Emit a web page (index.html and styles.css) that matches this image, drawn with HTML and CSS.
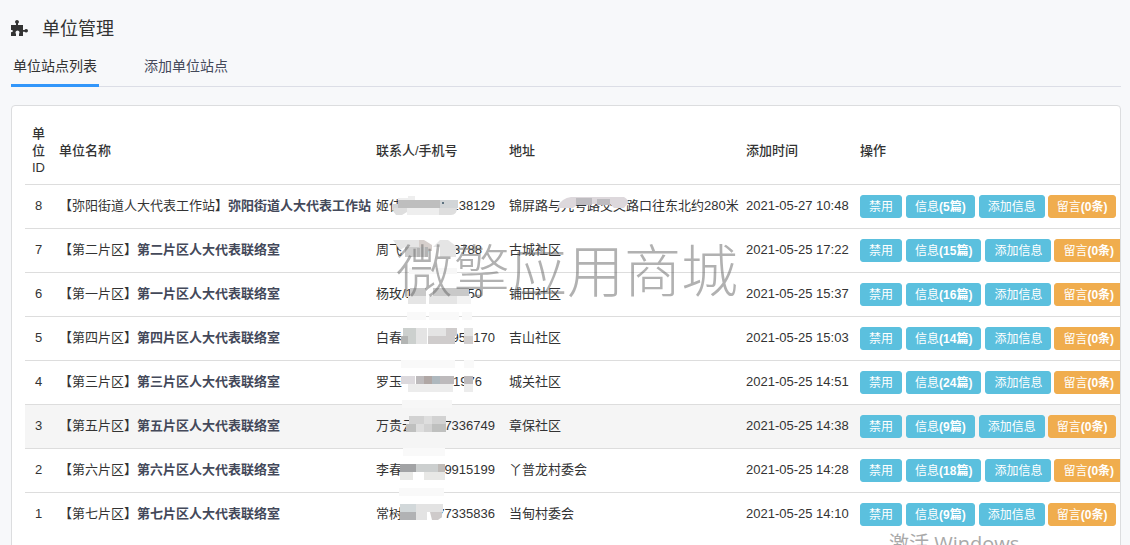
FILE: index.html
```html
<!DOCTYPE html>
<html lang="zh-CN">
<head>
<meta charset="utf-8">
<title>单位管理</title>
<link rel="stylesheet" href="styles.css">
</head>
<body>
<main class="page">
  <header class="head">
    <svg class="puzzle" viewBox="0 0 17 16" aria-hidden="true"><path d="M0 5h5V3.500Q4 3 4 1.800Q4.300 0 6 0T8 1.800Q8 3 7 3.500V5h5v5h1.500Q14 9 15.300 9Q17 9.300 17 10.800T15.300 12.500Q14 12.500 13.500 11.700H12V16H8v-2Q8.500 13 8.500 12Q8 10.500 6.500 10.500T4.500 12Q4.500 13.500 5 14v2H0v-4Q1.500 12.500 2 11Q1.500 9.500 0 10Z"/></svg>
    <h1>单位管理</h1>
  </header>
  <nav class="tabs">
    <a class="tab active" href="#list">单位站点列表</a>
    <a class="tab" href="#add">添加单位站点</a>
  </nav>
  <section class="panel" id="list">
    <table>
      <colgroup><col class="c-id"><col><col class="c-contact"><col class="c-address"><col class="c-time"><col class="c-ops"></colgroup>
      <thead>
        <tr><th class="id">单位ID</th><th>单位名称</th><th>联系人/手机号</th><th>地址</th><th>添加时间</th><th>操作</th></tr>
      </thead>
      <tbody>
        <tr>
          <td class="id">8</td>
          <td>【弥阳街道人大代表工作站】<a href="#8">弥阳街道人大代表工作站</a></td>
          <td class="contact"><div class="long"><span>姬佳</span><span>138129</span></div>
            <svg class="mosaic" viewBox="0 0 133 44" aria-hidden="true"><path fill="#eee" d="M39 11h7v4h-7zM29 13h10v3h-10zM38 23h32v7h-32z"/><path fill="#bebebe" d="M29 15h42v8h-42z"/><path fill="#d2d5d7" d="M71 15h18v8h-18zM23 19h6v6h-6z"/><path fill="#dedede" d="M25 23h13v4l-5 3h-6l-3-4zM70 23h18q0 7-6 7h-12z"/><path fill="#5e7280" d="M73 17h2v2h-2z"/></svg></td>
          <td class="address">锦屏路与九号路交叉路口往东北约280米
            <svg class="mosaic" viewBox="0 0 133 44" aria-hidden="true"><path fill="#ddd8dc" d="M55 22q5-9 14-10h53q5 3 4 6l-4 5h-10l-4-4h-18l-3 1h-12l-4 3h-14z"/><path fill="#bebcc0" d="M74 13h16v7h-16zM95 14h13v6h-13z"/></svg></td>
          <td>2021-05-27 10:48</td>
          <td><div class="ops"><button class="btn">禁用</button><button class="btn">信息<b>(5篇)</b></button><button class="btn">添加信息</button><button class="btn warn">留言<b>(0条)</b></button></div></td>
        </tr>
        <tr>
          <td class="id">7</td>
          <td>【第二片区】<a href="#7">第二片区人大代表联络室</a></td>
          <td class="contact"><div><span>周飞</span><span>7</span><span>3788</span></div>
            <svg class="mosaic" viewBox="0 0 133 44" aria-hidden="true"><path fill="#e5e5e5" d="M24 11h26v7h-14l-5 3zM64 18l7-7h8l8 6v11h-16v-10z"/><path fill="#d6cfcc" d="M50 11h5l8 5v6h-13z"/><path fill="#ccc" d="M36 18h20v10h-20z"/><path fill="#b4b4b4" d="M48 19h3v9h-3zM56 18h3v10h-3z"/></svg></td>
          <td>古城社区</td><td>2021-05-25 17:22</td>
          <td><div class="ops"><button class="btn">禁用</button><button class="btn">信息<b>(15篇)</b></button><button class="btn">添加信息</button><button class="btn warn">留言<b>(0条)</b></button></div></td>
        </tr>
        <tr>
          <td class="id">6</td>
          <td>【第一片区】<a href="#6">第一片区人大代表联络室</a></td>
          <td class="contact"><div><span>杨玫/1</span><span>2</span><span>50</span></div>
            <svg class="mosaic" viewBox="0 0 133 44" aria-hidden="true"><path fill="#f7f7f7" d="M40-5h48v6h-48z"/><path fill="#c9c9c9" d="M41 15h16v8h-16zM64 15h36v8h-36z"/><path fill="#e5e5e5" d="M39 23h18v8h-18zM60 23h28v8h-28z"/><path fill="#f3f3f3" d="M88 23h14v8h-14z"/></svg></td>
          <td>铺田社区</td><td>2021-05-25 15:37</td>
          <td><div class="ops"><button class="btn">禁用</button><button class="btn">信息<b>(16篇)</b></button><button class="btn">添加信息</button><button class="btn warn">留言<b>(0条)</b></button></div></td>
        </tr>
        <tr>
          <td class="id">5</td>
          <td>【第四片区】<a href="#5">第四片区人大代表联络室</a></td>
          <td class="contact"><div class="long"><span>白春</span><span>95&#8199;170</span></div>
            <svg class="mosaic" viewBox="0 0 133 44" aria-hidden="true"><path fill="#f9f9f9" d="M38-5h19v8h-19zM60-5h30v8h-30zM93-5h10v8h-10z"/><path fill="#ccd0ce" d="M34 11h13v8h-13zM39 19h8v8h-8z"/><path fill="#e4e4e4" d="M47 11h11v16h-11zM59 11h18v8h-18zM95 11h9v8h-9z"/><path fill="#b3b5b4" d="M32 19h7v8h-7z"/><path fill="#cfcccc" d="M59 19h27v8h-27zM77 11h11v8h-11zM95 19h9v8h-9z"/></svg></td>
          <td>吉山社区</td><td>2021-05-25 15:03</td>
          <td><div class="ops"><button class="btn">禁用</button><button class="btn">信息<b>(14篇)</b></button><button class="btn">添加信息</button><button class="btn warn">留言<b>(0条)</b></button></div></td>
        </tr>
        <tr>
          <td class="id">4</td>
          <td>【第三片区】<a href="#4">第三片区人大代表联络室</a></td>
          <td class="contact"><div><span>罗玉</span><span>1976</span></div>
            <svg class="mosaic" viewBox="0 0 133 44" aria-hidden="true"><path fill="#f9f9f9" d="M32-1h54v8h-54zM95-1h10v8h-10z"/><path fill="#dcd9dd" d="M32 15h14v8h-14z"/><path fill="#bdbabc" d="M47 15h38v8h-38zM95 15h9v8h-9z"/><path fill="#b0a7a5" d="M55 15h8v8h-8z"/><path fill="#aeb8be" d="M63 15h8v8h-8z"/><path fill="#ececec" d="M39 23h45v8h-45zM95 23h9v8h-9z"/></svg></td>
          <td>城关社区</td><td>2021-05-25 14:51</td>
          <td><div class="ops"><button class="btn">禁用</button><button class="btn">信息<b>(24篇)</b></button><button class="btn">添加信息</button><button class="btn warn">留言<b>(0条)</b></button></div></td>
        </tr>
        <tr class="current">
          <td class="id">3</td>
          <td>【第五片区】<a href="#3">第五片区人大代表联络室</a></td>
          <td class="contact"><div class="long"><span>万贵云</span><span>7336749</span></div>
            <svg class="mosaic" viewBox="0 0 133 44" aria-hidden="true"><path fill="#f7f7f7" d="M33-5h50v8h-50z"/><path fill="#d2d2d2" d="M40 11h37v8h-37zM54 19h9v8h-9z"/><path fill="#bfc0bf" d="M37 19h10v8h-10zM63 19h14v8h-14z"/><path fill="#dedede" d="M47 19h8v8h-8zM55 11h8v8h-8z"/></svg></td>
          <td>章保社区</td><td>2021-05-25 14:38</td>
          <td><div class="ops"><button class="btn">禁用</button><button class="btn">信息<b>(9篇)</b></button><button class="btn">添加信息</button><button class="btn warn">留言<b>(0条)</b></button></div></td>
        </tr>
        <tr>
          <td class="id">2</td>
          <td>【第六片区】<a href="#2">第六片区人大代表联络室</a></td>
          <td class="contact"><div class="long"><span>李春</span><span>9915199</span></div>
            <svg class="mosaic" viewBox="0 0 133 44" aria-hidden="true"><path fill="#f9f9f9" d="M34-1h42v8h-42z"/><path fill="#a2a3a5" d="M31 15h16v8h-16z"/><path fill="#cccfcf" d="M47 15h22v8h-22z"/><path fill="#bfbbb8" d="M69 15h7v8h-7z"/><path fill="#e8e8e6" d="M31 23h13v8h-13zM55 23h21v8h-21z"/></svg></td>
          <td>丫普龙村委会</td><td>2021-05-25 14:28</td>
          <td><div class="ops"><button class="btn">禁用</button><button class="btn">信息<b>(18篇)</b></button><button class="btn">添加信息</button><button class="btn warn">留言<b>(0条)</b></button></div></td>
        </tr>
        <tr>
          <td class="id">1</td>
          <td>【第七片区】<a href="#1">第七片区人大代表联络室</a></td>
          <td class="contact"><div class="long"><span>常树</span><span>77335836</span></div>
            <svg class="mosaic" viewBox="0 0 133 44" aria-hidden="true"><path fill="#f9f9f9" d="M30-5h45v8h-45z"/><path fill="#d2d8da" d="M31 11h16v8h-16z"/><path fill="#e3e3e3" d="M47 11h27v8h-27zM47 19h11v8h-11z"/><path fill="#b1b2b4" d="M31 19h16v8h-16z"/><path fill="#cecaca" d="M61 19h12v5l-4 3h-6z"/></svg></td>
          <td>当甸村委会</td><td>2021-05-25 14:10</td>
          <td><div class="ops"><button class="btn">禁用</button><button class="btn">信息<b>(9篇)</b></button><button class="btn">添加信息</button><button class="btn warn">留言<b>(0条)</b></button></div></td>
        </tr>
      </tbody>
    </table>
  </section>
</main>
<div class="watermark">微擎应用商城</div>
<div class="activate">激活 Windows</div>
</body>
</html>
```
FILE: styles.css
```css
* { box-sizing: border-box; }
html { height: 100%; overflow: hidden; }
body {
  position: relative;
  height: 100%;
  margin: 0;
  overflow: hidden;
  background: #f7f8fa;
  color: #333;
  font: 13px/17px "Liberation Sans", "Noto Sans CJK SC", sans-serif;
}
a { color: #44495a; text-decoration: none; }
.page { padding: 16px 9px 0 11px; }
.head { display: flex; align-items: center; gap: 14px; height: 24px; }
.puzzle { width: 17px; height: 16px; fill: #333; }
h1 { margin: 0; padding-top: 2px; font-size: 18px; line-height: 24px; font-weight: 400; }
.tabs {
  display: flex;
  gap: 43px;
  height: 47px;
  border-bottom: 1px solid #dcdee6;
}
.tab {
  height: 47px;
  padding: 16px 2px 0;
  font-size: 14px;
  line-height: 20px;
}
.tab.active { border-bottom: 3px solid #3296fa; color: #333; }
.panel {
  margin-top: 18px;
  padding: 12px 0 40px 13px;
  overflow: hidden;
  background: #fff;
  border: 1px solid #dcdddf;
  border-radius: 4px;
}
table { width: 100%; table-layout: fixed; border-spacing: 0; }
.c-id { width: 27px; }
.c-contact { width: 133px; }
.c-address { width: 237px; }
.c-time { width: 114px; }
.c-ops { width: 267px; }
th { height: 66px; padding: 0 7px 2px; text-align: left; font-weight: 500; }
th.id { padding: 6px 6px 8px; word-break: break-word; }
td {
  height: 44px;
  padding: 0 7px 2px;
  border-top: 1px solid #ddd;
  white-space: nowrap;
}
td:last-child { padding-bottom: 0; }
.id { text-align: center; }
td a { font-weight: 700; }
.current { background: #f5f5f5; }
.contact, .address { position: relative; }
.contact div { display: flex; justify-content: space-between; width: 106px; }
.contact .long { width: 119px; }
.mosaic {
  position: absolute;
  top: 0;
  left: 0;
  width: 133px;
  height: 44px;
  overflow: visible;
}
.ops { display: flex; gap: 4px; }
.btn {
  flex: none;
  height: 23px;
  padding: 0 8px;
  border: 1px solid #5bc0de;
  border-radius: 3px;
  background: #5bc0de;
  color: #fff;
  font: 12px/18px "Liberation Sans", "Noto Sans CJK SC", sans-serif;
}
.btn b { font-weight: 700; }
.btn.warn { margin-left: -1px; background: #f0ad4e; border-color: #f0ad4e; }
.watermark {
  position: absolute;
  top: 240px;
  left: 396px;
  color: rgba(100, 100, 100, .5);
  font-size: 57px;
  line-height: 64px;
  font-weight: 300;
  white-space: nowrap;
  pointer-events: none;
}
.activate {
  position: absolute;
  top: 531px;
  left: 889px;
  color: #a9a9a9;
  font: 20px/26px "Open Sans", "Noto Sans CJK SC", sans-serif;
  white-space: nowrap;
  pointer-events: none;
}
```
